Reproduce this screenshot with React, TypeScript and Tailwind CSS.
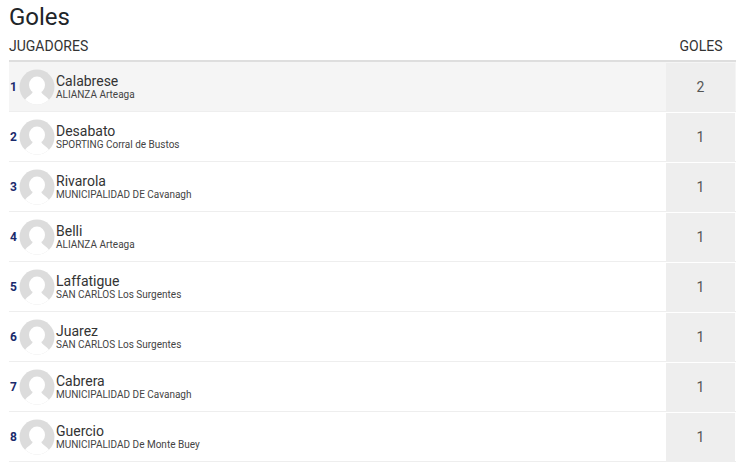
import React from 'react';

const players = [
  { name: 'Calabrese', team: 'ALIANZA Arteaga', goals: 2 },
  { name: 'Desabato', team: 'SPORTING Corral de Bustos', goals: 1 },
  { name: 'Rivarola', team: 'MUNICIPALIDAD DE Cavanagh', goals: 1 },
  { name: 'Belli', team: 'ALIANZA Arteaga', goals: 1 },
  { name: 'Laffatigue', team: 'SAN CARLOS Los Surgentes', goals: 1 },
  { name: 'Juarez', team: 'SAN CARLOS Los Surgentes', goals: 1 },
  { name: 'Cabrera', team: 'MUNICIPALIDAD DE Cavanagh', goals: 1 },
  { name: 'Guercio', team: 'MUNICIPALIDAD De Monte Buey', goals: 1 },
];

function Avatar({ id }: { id: number }) {
  return (
    <svg width="36" height="36" viewBox="0 0 36 36" className="shrink-0">
      <clipPath id={`avatar-clip-${id}`}>
        <circle cx="18" cy="18" r="17.5" />
      </clipPath>
      <circle cx="18" cy="18" r="17.5" fill="#dcdcdc" />
      <g clipPath={`url(#avatar-clip-${id})`} fill="#fff">
        <ellipse cx="18" cy="16" rx="8" ry="8.5" />
        <path d="M14 22 C13.5 26 8 27 6 31 L6 36 L30 36 L30 31 C28 27 22.5 26 22 22 Z" />
      </g>
    </svg>
  );
}

export default function App() {
  return (
    <div className="w-[744px] h-[475px] overflow-hidden bg-white pl-[9px] pr-2 font-['Roboto',sans-serif] text-[#212529]">
      <h2 className="text-[24px] leading-[29px] pt-[3px] h-[32px] font-normal">Goles</h2>
      <div className="flex items-center h-[30px] border-b-2 border-[#dedede] text-[14px] text-[#333]">
        <div className="flex-1">JUGADORES</div>
        <div className="w-[70px] text-center">GOLES</div>
      </div>
      {players.map((p, i) => (
        <div
          key={p.name}
          className={`flex h-[50px] border-b border-[#eeeeee] ${i === 0 ? 'bg-[#f5f5f5]' : ''}`}
        >
          <div className="flex flex-1 items-center">
            <span className="w-[10px] text-[12px] font-bold text-[#1a2a6c] pl-[1px] pt-[1px]">{i + 1}</span>
            <Avatar id={i} />
            <div className="pl-[1px] pt-[1px]">
              <div className="text-[14px] leading-[15px] text-[#333]">{p.name}</div>
              <div className="text-[10px] leading-[12px] text-[#444]">{p.team}</div>
            </div>
          </div>
          <div className="w-[69px] mr-[1px] mt-[1px] flex items-center justify-center bg-[#eeeeee] text-[14px] text-[#555]">{p.goals}</div>
        </div>
      ))}
    </div>
  );
}
